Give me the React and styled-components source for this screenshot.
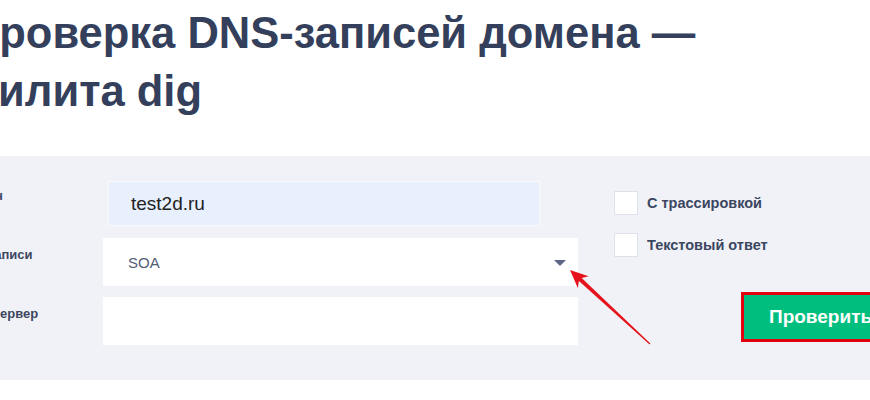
import React from 'react';
import styled, { createGlobalStyle } from 'styled-components';

const GlobalStyle = createGlobalStyle`
  html, body {
    margin: 0;
    padding: 0;
    background: #ffffff;
    overflow: hidden;
  }
  body {
    font-family: "Liberation Sans", Arial, sans-serif;
  }
`;

function App() {
  return (
    <>
      <GlobalStyle />
      <Page>
        <Title>
          <TitleLine $shift={-32}>Проверка DNS-записей домена —</TitleLine>
          <TitleLine $shift={-48}>утилита dig</TitleLine>
        </Title>

        <Panel>
          <Fields>
            <Label>Домен</Label>
            <Cell>
              <DomainInput defaultValue="test2d.ru" />
            </Cell>

            <Label>Тип записи</Label>
            <Cell>
              <Select>
                <span>SOA</span>
                <Caret />
              </Select>
            </Cell>

            <Label>DNS-сервер</Label>
            <Cell>
              <TextInput />
            </Cell>
          </Fields>

          <Options>
            <CheckRow>
              <Box />
              <CheckText>С трассировкой</CheckText>
            </CheckRow>
            <CheckRow>
              <Box />
              <CheckText>Текстовый ответ</CheckText>
            </CheckRow>
            <SubmitButton>Проверить</SubmitButton>
          </Options>
        </Panel>

        {/* red annotation arrow pointing at the select caret */}
        <Arrow viewBox="560 260 100 95" width="100" height="95">
          <polygon
            fill="#e5141c"
            points="570,270 588.6,276.3 581.7,278 650.4,343.6 649.6,344.4 578.9,281 577.8,288.1"
          />
        </Arrow>
      </Page>
    </>
  );
}

export default App;

const Page = styled.div`
  position: relative;
  width: 1000px;
`;

const Title = styled.h1`
  margin: 0;
  padding-top: 4px;
  font-size: 43.5px;
  line-height: 58px;
  font-weight: 700;
  color: #343f5c;
  white-space: nowrap;
`;

const TitleLine = styled.div`
  margin-left: ${p => p.$shift}px;
`;

const Panel = styled.div`
  margin-top: 36px;
  margin-left: -39px;
  background: #f1f2f7;
  display: flex;
  align-items: flex-start;
  padding: 23px 0 35px;
`;

const Fields = styled.div`
  display: grid;
  grid-template-columns: 142px 475px;
  row-gap: 11px;
`;

const Label = styled.div`
  padding-top: 9px;
  font-size: 13px;
  line-height: 16px;
  font-weight: 700;
  color: #3c4660;
`;

const Cell = styled.div`
  height: 48px;
`;

const DomainInput = styled.input`
  box-sizing: border-box;
  display: block;
  margin: 2px 0 0 5px;
  width: 432px;
  height: 45px;
  padding: 0 22px;
  border: 1px solid #f7f9fd;
  background: #e8f0fe;
  outline: none;
  font-family: "Liberation Sans", Arial, sans-serif;
  font-size: 19px;
  color: #222222;
`;

const Select = styled.div`
  box-sizing: border-box;
  height: 48px;
  background: #ffffff;
  display: flex;
  align-items: center;
  justify-content: space-between;
  padding: 0 12px 0 25px;
  font-size: 15px;
  color: #525c75;
`;

const Caret = styled.span`
  width: 0;
  height: 0;
  border-left: 6px solid transparent;
  border-right: 6px solid transparent;
  border-top: 6px solid #5c6985;
  margin-top: 2px;
`;

const TextInput = styled.input`
  box-sizing: border-box;
  display: block;
  width: 475px;
  height: 48px;
  border: none;
  background: #ffffff;
  outline: none;
`;

const Options = styled.div`
  margin-left: 36px;
  display: flex;
  flex-direction: column;
  padding-top: 12px;
`;

const CheckRow = styled.label`
  display: flex;
  align-items: center;
  gap: 9px;
  height: 24px;
  margin-bottom: 18px;
`;

const Box = styled.span`
  box-sizing: border-box;
  width: 24px;
  height: 24px;
  background: #ffffff;
  border: 1px solid #dde1ea;
`;

const CheckText = styled.span`
  font-size: 14.5px;
  font-weight: 700;
  color: #3b4661;
`;

const SubmitButton = styled.button`
  margin: 17px 0 0 127px;
  box-sizing: border-box;
  width: 170px;
  height: 50px;
  background: #00be7e;
  border: 3px solid #e3000f;
  color: #ffffff;
  font-family: "Liberation Sans", Arial, sans-serif;
  font-size: 19px;
  font-weight: 700;
  text-align: left;
  padding-left: 25px;
`;

const Arrow = styled.svg`
  position: absolute;
  left: 560px;
  top: 260px;
  overflow: visible;
`;
